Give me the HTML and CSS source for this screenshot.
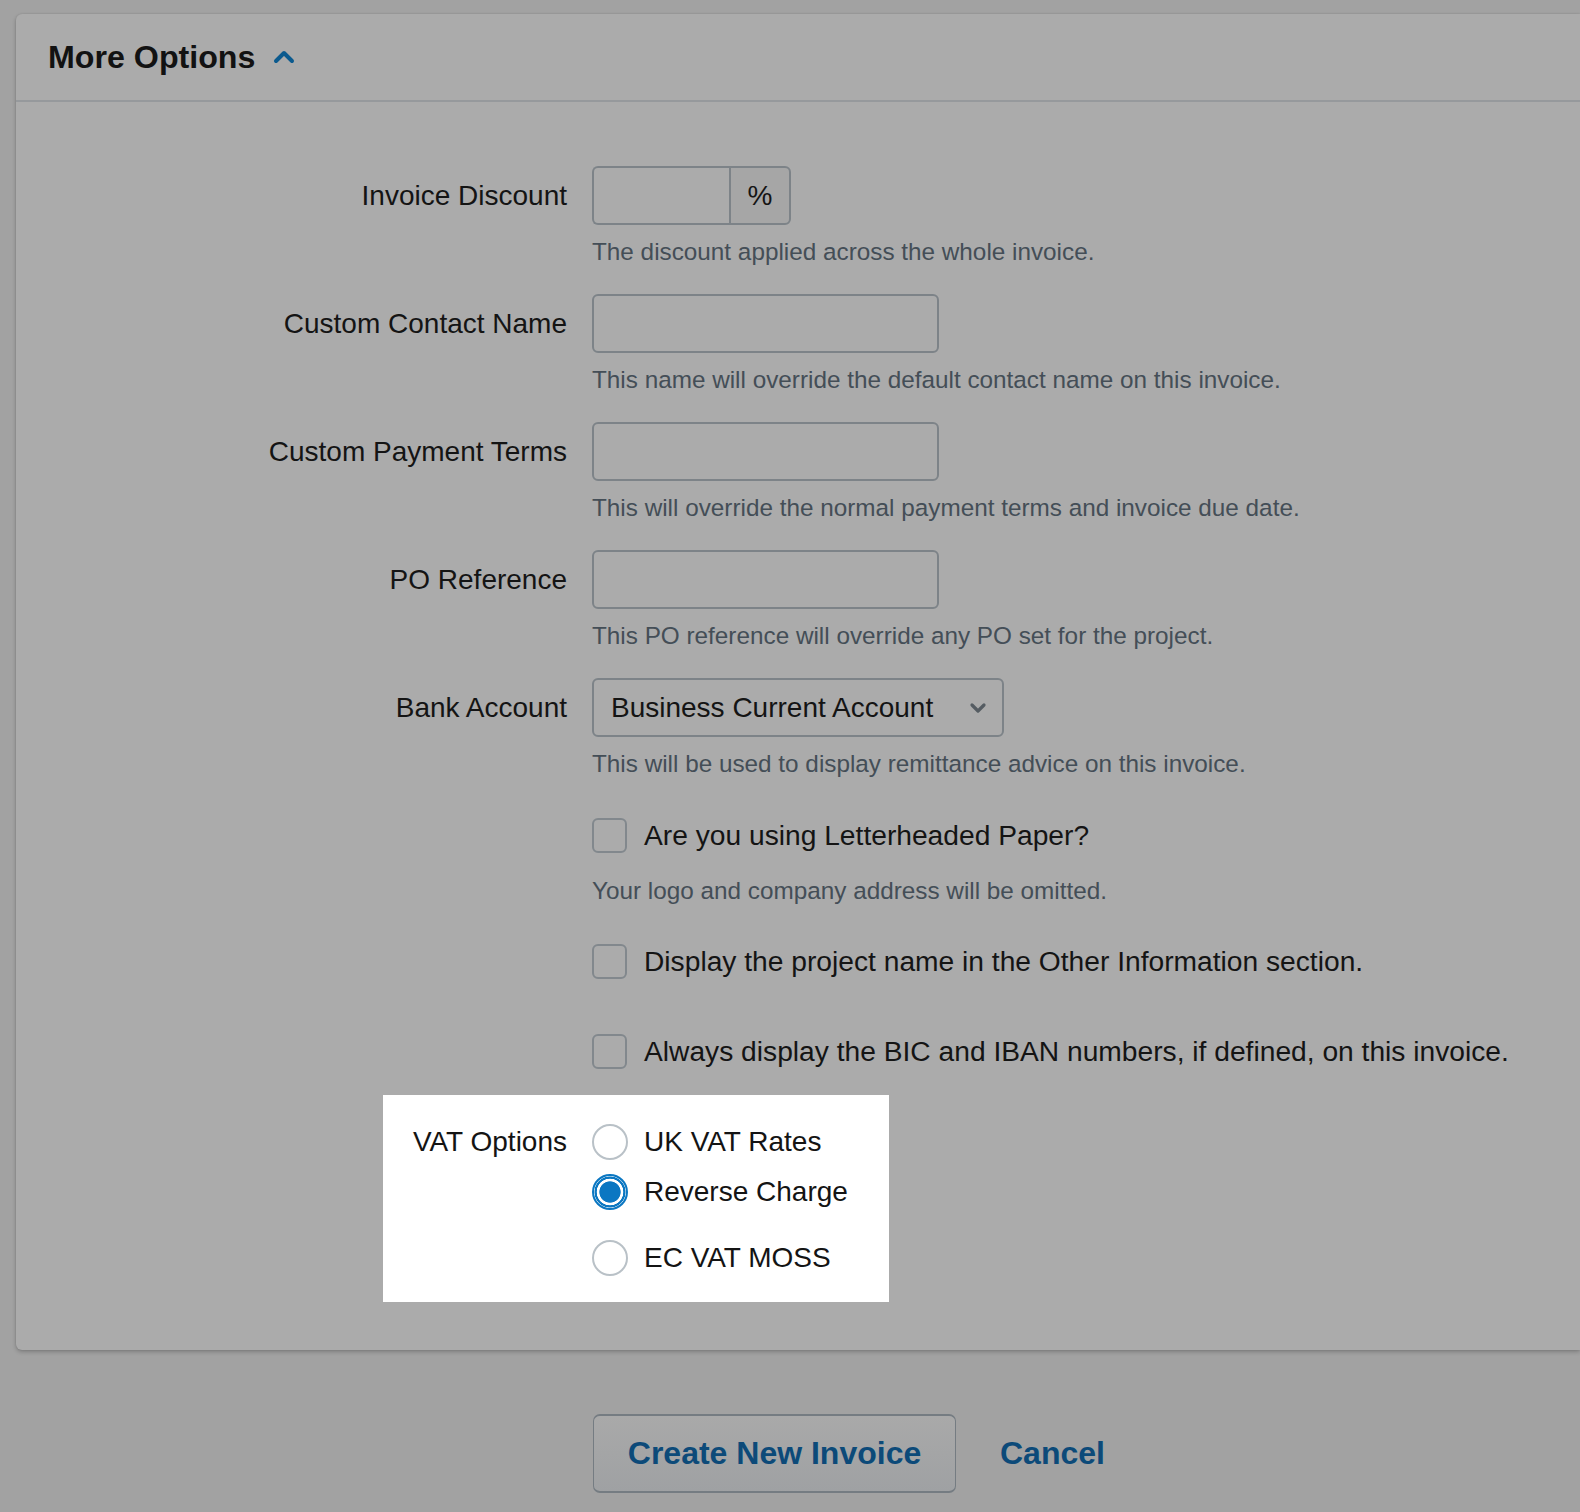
FILE: index.html
```html
<!DOCTYPE html>
<html lang="en">
<head>
<meta charset="utf-8">
<title>More Options</title>
<link rel="stylesheet" href="styles.css">
</head>
<body>
<section class="panel">
  <header class="panel-header">
    <h2 class="panel-title">More Options</h2>
    <svg class="caret-up" width="24" height="16" viewBox="0 0 24 16" aria-hidden="true">
      <path d="M4 12 L12 4 L20 12" fill="none" stroke="#0b5a8e" stroke-width="4" stroke-linecap="round" stroke-linejoin="round"/>
    </svg>
  </header>

  <div class="panel-body">
    <div class="field">
      <label class="field-label">Invoice Discount</label>
      <div class="field-control">
        <div class="input-group">
          <span class="input input-small"></span>
          <span class="addon">%</span>
        </div>
        <p class="help">The discount applied across the whole invoice.</p>
      </div>
    </div>

    <div class="field">
      <label class="field-label">Custom Contact Name</label>
      <div class="field-control">
        <span class="input input-text"></span>
        <p class="help">This name will override the default contact name on this invoice.</p>
      </div>
    </div>

    <div class="field">
      <label class="field-label">Custom Payment Terms</label>
      <div class="field-control">
        <span class="input input-text"></span>
        <p class="help">This will override the normal payment terms and invoice due date.</p>
      </div>
    </div>

    <div class="field">
      <label class="field-label">PO Reference</label>
      <div class="field-control">
        <span class="input input-text"></span>
        <p class="help">This PO reference will override any PO set for the project.</p>
      </div>
    </div>

    <div class="field">
      <label class="field-label">Bank Account</label>
      <div class="field-control">
        <div class="select">
          <span class="select-value">Business Current Account</span>
          <svg class="caret-down" width="20" height="14" viewBox="0 0 20 14" aria-hidden="true">
            <path d="M4 4 L10 10 L16 4" fill="none" stroke="#555c62" stroke-width="3.2" stroke-linecap="round" stroke-linejoin="round"/>
          </svg>
        </div>
        <p class="help">This will be used to display remittance advice on this invoice.</p>
      </div>
    </div>

    <div class="check-row check-first">
      <div class="field-control">
        <label class="check"><span class="checkbox"></span><span class="check-text">Are you using Letterheaded Paper?</span></label>
        <p class="help help-check">Your logo and company address will be omitted.</p>
      </div>
    </div>

    <div class="check-row check-second">
      <div class="field-control">
        <label class="check"><span class="checkbox"></span><span class="check-text">Display the project name in the Other Information section.</span></label>
      </div>
    </div>

    <div class="check-row check-third">
      <div class="field-control">
        <label class="check"><span class="checkbox"></span><span class="check-text">Always display the BIC and IBAN numbers, if defined, on this invoice.</span></label>
      </div>
    </div>

    <div class="vat-box">
      <div class="vat-label">VAT Options</div>
      <div class="radios">
        <label class="radio-row"><span class="radio"></span><span class="radio-text">UK VAT Rates</span></label>
        <label class="radio-row"><span class="radio radio-checked"></span><span class="radio-text">Reverse Charge</span></label>
        <label class="radio-row radio-last"><span class="radio"></span><span class="radio-text">EC VAT MOSS</span></label>
      </div>
    </div>
  </div>
</section>

<footer class="actions">
  <button class="btn-primary" type="button">Create New Invoice</button>
  <a class="btn-link" href="#">Cancel</a>
</footer>
</body>
</html>
```

FILE: styles.css
```css
* {
  box-sizing: border-box;
}

html, body {
  margin: 0;
  padding: 0;
}

body {
  background: #a2a2a2;
  font-family: "Liberation Sans", Arial, Helvetica, sans-serif;
  color: #141414;
  min-height: 1512px;
  overflow: hidden;
}

.panel {
  margin: 14px 0 0 16px;
  background: #ababab;
  border-radius: 6px 0 0 6px;
  box-shadow: 0 2px 4px rgba(0, 0, 0, 0.22), 0 0 2px rgba(0, 0, 0, 0.12);
}

.panel-header {
  height: 88px;
  display: flex;
  align-items: center;
  padding-left: 32px;
  border-bottom: 2px solid #96999c;
}

.panel-title {
  margin: 0;
  font-size: 32.2px;
  font-weight: 700;
  color: #121212;
  line-height: 1;
}

.caret-up {
  margin-left: 17px;
}

.panel-body {
  padding: 64px 0 48px 0;
}

.field {
  display: grid;
  grid-template-columns: 551px 1fr;
  column-gap: 25px;
  margin-bottom: 28px;
}

.field-label {
  height: 59px;
  display: flex;
  align-items: center;
  justify-content: flex-end;
  font-size: 28px;
  color: #141414;
}

.field-control {
  grid-column: 2;
}

.input {
  display: block;
  height: 59px;
  border: 2px solid #7d8388;
  border-radius: 6px;
  background: transparent;
}

.input-text {
  width: 347px;
}

.input-group {
  display: flex;
  width: 199px;
  height: 59px;
}

.input-small {
  width: 137px;
  border-right: none;
  border-radius: 6px 0 0 6px;
}

.addon {
  flex: 1;
  display: flex;
  align-items: center;
  justify-content: center;
  font-size: 28px;
  color: #141414;
  background: #a6a6a6;
  border: 2px solid #7d8388;
  border-radius: 0 6px 6px 0;
}

.help {
  margin: 13px 0 0 0;
  font-size: 24.3px;
  line-height: 28px;
  color: #444e57;
}

.select {
  width: 412px;
  height: 59px;
  border: 2px solid #7d8388;
  border-radius: 6px;
  display: flex;
  align-items: center;
  justify-content: space-between;
  padding: 0 14px 0 17px;
}

.select-value {
  font-size: 28px;
  color: #141414;
}

.caret-down {
  display: block;
}

.check-row {
  display: grid;
  grid-template-columns: 551px 1fr;
  column-gap: 25px;
}

.check-first {
  margin-top: 40px;
}

.check-second {
  margin-top: 39px;
}

.check-third {
  margin-top: 55px;
}

.check {
  display: flex;
  align-items: center;
  height: 35px;
}

.checkbox {
  width: 35px;
  height: 35px;
  border: 2px solid #82888d;
  border-radius: 6px;
  flex-shrink: 0;
}

.check-text {
  margin-left: 17px;
  font-size: 28.2px;
  color: #141414;
  white-space: nowrap;
}

.help-check {
  margin-top: 24px;
}

.vat-box {
  margin: 26px 0 0 367px;
  width: 506px;
  background: #ffffff;
  display: flex;
  padding: 29px 0 27px 0;
}

.vat-label {
  width: 184px;
  height: 35px;
  display: flex;
  align-items: center;
  justify-content: flex-end;
  font-size: 28px;
  color: #141414;
}

.radios {
  margin-left: 25px;
  display: flex;
  flex-direction: column;
  gap: 15px;
}

.radio-row {
  display: flex;
  align-items: center;
  height: 35px;
}

.radio-last {
  margin-top: 16px;
}

.radio {
  width: 36px;
  height: 36px;
  border-radius: 50%;
  border: 2px solid #b9c1c7;
  background: #ffffff;
  flex-shrink: 0;
}

.radio-checked {
  border: 2px solid #0b77c2;
  background: radial-gradient(circle closest-side, #0b77c2 0, #0b77c2 10.3px, #ffffff 11px, #ffffff 13px, #0b77c2 13.6px, #0b77c2 15.2px, #d7e9f5 15.7px, #d7e9f5 16px);
}

.radio-text {
  margin-left: 16px;
  font-size: 28px;
  color: #141414;
}

.actions {
  display: flex;
  align-items: center;
  margin-top: 64px;
  padding-left: 593px;
}

.btn-primary {
  width: 363px;
  height: 79px;
  border: 2px solid #757c82;
  border-left-width: 1px;
  border-right-width: 1px;
  border-radius: 7px;
  background: linear-gradient(#a9a9a9, #9fa1a3);
  font-family: "Liberation Sans", Arial, Helvetica, sans-serif;
  font-size: 32px;
  font-weight: 700;
  color: #0c4a79;
  padding: 0;
}

.btn-link {
  margin-left: 44px;
  font-size: 32px;
  font-weight: 700;
  color: #0c4a79;
  text-decoration: none;
}
```
